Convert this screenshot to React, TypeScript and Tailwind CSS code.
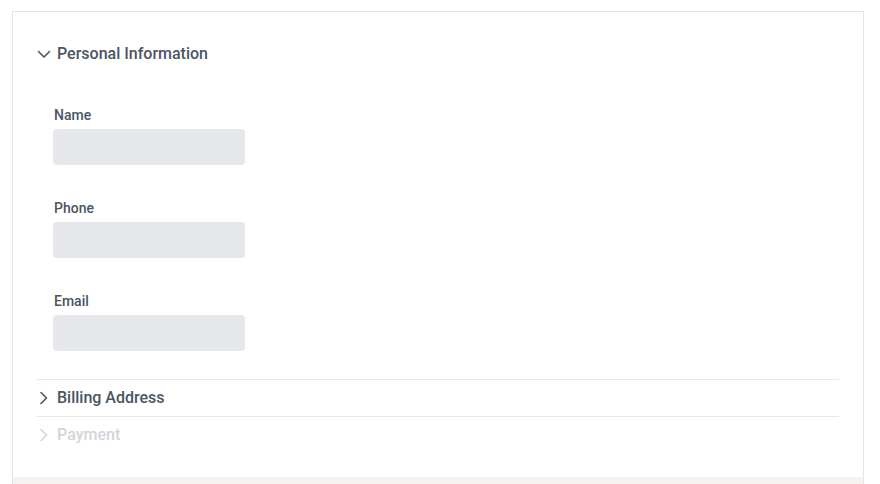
import React from 'react';

const Chevron: React.FC<{ open?: boolean; className?: string }> = ({ open, className }) => (
  <svg
    width="14"
    height="14"
    viewBox="0 0 14 14"
    fill="none"
    stroke="currentColor"
    strokeWidth="1.6"
    strokeLinecap="round"
    strokeLinejoin="round"
    className={className}
  >
    {open ? <path d="M1.5 4.5l5.5 5.5 5.5-5.5" /> : <path d="M4 1.5l5.5 5.5-5.5 5.5" />}
  </svg>
);

const Field: React.FC<{ label: string }> = ({ label }) => (
  <div className="flex flex-col">
    <label className="text-sm font-medium text-[#4b5563] leading-5 pl-px">{label}</label>
    <div className="mt-1 h-9 w-48 rounded bg-[#e5e7eb]" />
  </div>
);

export default function App() {
  return (
    <div className="min-h-screen bg-white font-['Roboto',sans-serif] pt-[11px] pl-3">
      <div className="w-[852px] border border-[#e5e5e5] bg-white">
        <div className="px-6 pt-6 pb-6">
          <div className="flex h-9 items-center gap-1.5 text-[#4b5563]">
            <Chevron open className="text-[#4b5563]" />
            <span className="text-base font-medium">Personal Information</span>
          </div>
          <div className="flex flex-col gap-[33px] pl-4 pt-[33px] pb-[28px]">
            <Field label="Name" />
            <Field label="Phone" />
            <Field label="Email" />
          </div>
          <div className="flex h-[37px] items-center gap-1.5 border-t border-[#e5e7eb] text-[#4b5563]">
            <Chevron className="text-[#4b5563]" />
            <span className="text-base font-medium">Billing Address</span>
          </div>
          <div className="flex h-[37px] items-center gap-1.5 border-t border-[#e5e7eb] text-[#d1d5db]">
            <Chevron className="text-[#d1d5db]" />
            <span className="text-base font-medium">Payment</span>
          </div>
        </div>
        <div className="h-10 bg-[#f5f2ef]" />
      </div>
    </div>
  );
}
